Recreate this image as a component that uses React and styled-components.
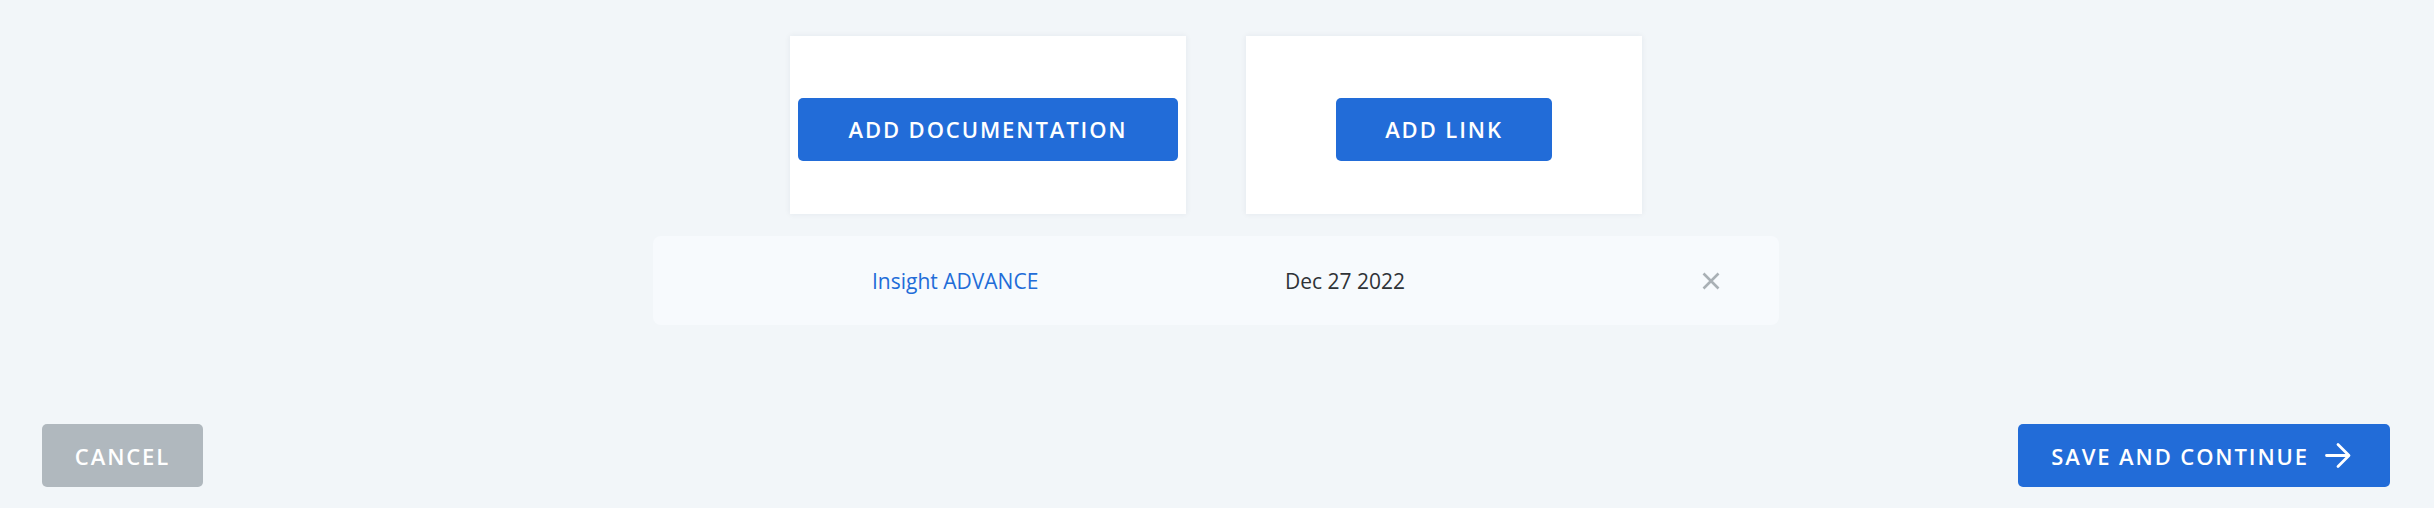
import styled, { createGlobalStyle } from "styled-components";

const GlobalStyle = createGlobalStyle`
  * {
    margin: 0;
    padding: 0;
    box-sizing: border-box;
  }

  body {
    font-family: "Open Sans", "Noto Sans", sans-serif;
    background: #f2f6f9;
  }
`;

const Page = styled.div`
  height: 508px;
  display: flex;
  flex-direction: column;
  justify-content: space-between;
  padding: 36px 44px 21px 42px;
`;

const Content = styled.div`
  display: flex;
  flex-direction: column;
  align-items: center;
  gap: 22px;
`;

const Cards = styled.div`
  display: flex;
  gap: 60px;
`;

const Card = styled.div`
  width: 396px;
  height: 178px;
  background: #ffffff;
  box-shadow: 0 0 6px rgba(20, 40, 70, 0.07);
  display: flex;
  align-items: center;
  justify-content: center;
  padding-top: 8px;
`;

const Button = styled.button`
  height: 63px;
  border: none;
  border-radius: 5px;
  background: ${(p) => (p.$muted ? "#b0b8be" : "#226cd8")};
  color: #ffffff;
  font-family: "Open Sans", sans-serif;
  font-size: 22px;
  font-weight: 600;
  letter-spacing: 1.9px;
  text-transform: uppercase;
  display: flex;
  align-items: center;
  justify-content: center;
  gap: 16px;
  cursor: pointer;
  width: ${(p) => p.$width || "auto"};
  padding: ${(p) => p.$pad || "0"};
`;

const FileRow = styled.div`
  width: 1126px;
  height: 89px;
  background: #f7fafd;
  border-radius: 8px;
  display: flex;
  align-items: center;
  padding: 0 59px 0 219px;
  font-size: 21px;
`;

const FileName = styled.a`
  width: 413px;
  color: #226cd8;
  text-decoration: none;
`;

const FileDate = styled.span`
  flex: 1;
  color: #2f3337;
`;

const RemoveButton = styled.button`
  border: none;
  background: none;
  width: 18px;
  height: 18px;
  display: flex;
  cursor: pointer;
`;

const Footer = styled.div`
  display: flex;
  justify-content: space-between;
  align-items: center;
`;

const CloseIcon = () => (
  <svg width="18" height="18" viewBox="0 0 18 18" fill="none" stroke="#a9b0b5" strokeWidth="2.6">
    <path d="M1.5 1.5 16.5 16.5M16.5 1.5 1.5 16.5" />
  </svg>
);

const ArrowIcon = () => (
  <svg width="26" height="27" viewBox="0 0 26 27" fill="none" stroke="#ffffff" strokeWidth="2.8" strokeLinecap="round" strokeLinejoin="round">
    <path d="M1.5 13.5h22M13 2.5l11 11-11 11" />
  </svg>
);

export default function App() {
  return (
    <>
      <GlobalStyle />
      <Page>
        <Content>
          <Cards>
            <Card>
              <Button $width="380px">Add Documentation</Button>
            </Card>
            <Card>
              <Button $width="216px">Add Link</Button>
            </Card>
          </Cards>
          <FileRow>
            <FileName href="#">Insight ADVANCE</FileName>
            <FileDate>Dec 27 2022</FileDate>
            <RemoveButton aria-label="Remove">
              <CloseIcon />
            </RemoveButton>
          </FileRow>
        </Content>
        <Footer>
          <Button $muted $width="161px">Cancel</Button>
          <Button $pad="0 39px 0 33px">
            Save and Continue
            <ArrowIcon />
          </Button>
        </Footer>
      </Page>
    </>
  );
}
